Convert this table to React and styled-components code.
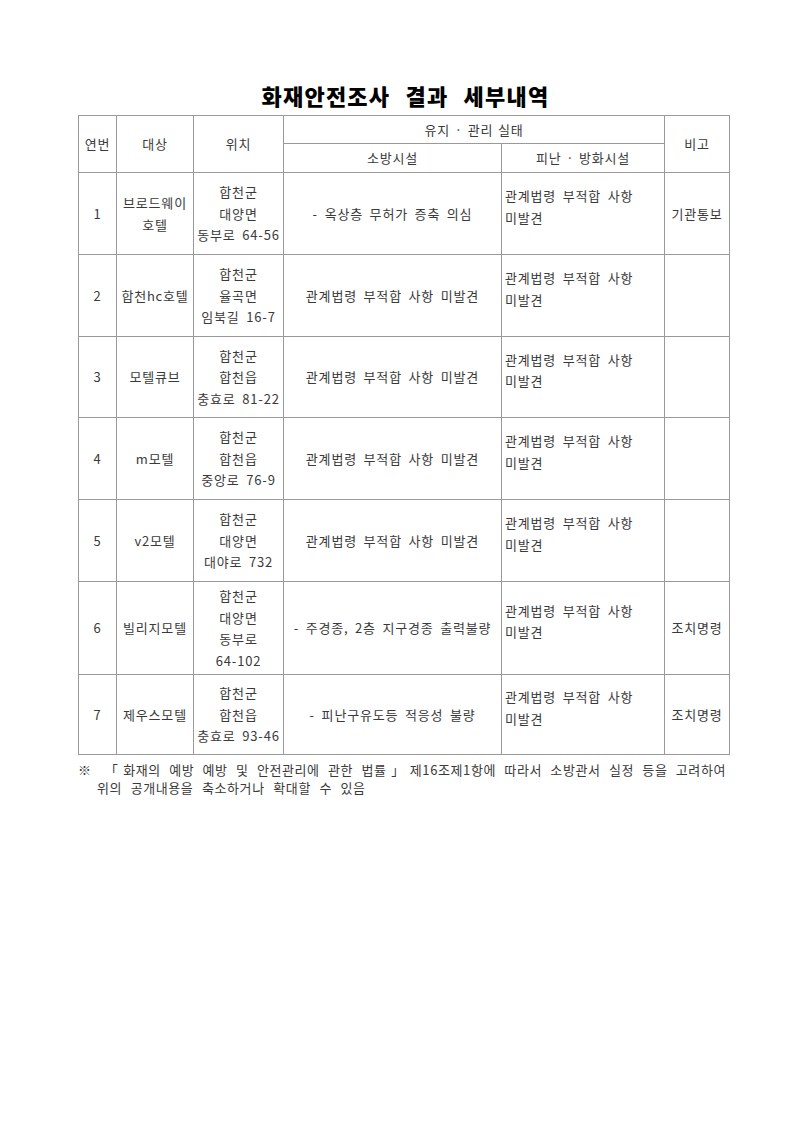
import React from "react";
import styled, { createGlobalStyle } from "styled-components";

const Global = createGlobalStyle`
  html, body { margin: 0; padding: 0; background: #fff; }
  body { font-family: "Noto Sans CJK KR", "Noto Sans", sans-serif; }
`;

const Page = styled.div`
  width: 800px;
  min-height: 1132px;
  box-sizing: border-box;
  padding: 80px 0 0 78px;
  background: #fff;
  color: #3a3a3a;
`;

const Title = styled.h1`
  margin: 0 0 5px 0;
  width: 651px;
  text-align: center;
  font-size: 22px;
  line-height: 30px;
  font-weight: 900;
  color: #000;
  letter-spacing: 1.2px;
  word-spacing: 9px;
  transform: translateX(2px);
`;

const Table = styled.table`
  width: 651px;
  table-layout: fixed;
  border-collapse: collapse;
  font-size: 13px;
  letter-spacing: 0.8px;
  word-spacing: 3px;
`;

const Row = styled.tr`
  height: ${(p) => p.$h}px;
`;

const Cell = styled.td`
  border: 1px solid #9a9a9a;
  padding: ${(p) => (p.$left ? "0 0 14px 3px" : "0 1px")};
  text-align: ${(p) => (p.$left ? "left" : "center")};
  vertical-align: middle;
  line-height: 21.5px;
  white-space: nowrap;
  font-weight: 400;
`;

const HeadCell = styled(Cell).attrs({ as: "th" })`
  font-weight: 400;
  padding: 0;
  word-spacing: 1px;
`;

const Line = styled.span`
  display: block;
`;

const Note = styled.div`
  width: 648px;
  margin-top: 6px;
  font-size: 13px;
  line-height: 18px;
  letter-spacing: 0.6px;
  color: #3a3a3a;
`;

const NoteLine = styled.div`
  padding-left: ${(p) => p.$indent || 0}px;
  text-align: ${(p) => (p.$justify ? "justify" : "left")};
  text-align-last: ${(p) => (p.$justify ? "justify" : "auto")};
  word-spacing: ${(p) => (p.$justify ? 0 : 5)}px;
  white-space: nowrap;
`;

const ok = "관계법령 부적합 사항 미발견";
const evac = ["관계법령 부적합 사항", "미발견"];

const rows = [
  { no: 1, h: 82, name: ["브로드웨이", "호텔"], loc: ["합천군", "대양면", "동부로 64-56"], fire: "- 옥상층 무허가 증축 의심", note: "기관통보" },
  { no: 2, h: 82, name: ["합천hc호텔"], loc: ["합천군", "율곡면", "임북길 16-7"], fire: ok, note: "" },
  { no: 3, h: 81, name: ["모텔큐브"], loc: ["합천군", "합천읍", "충효로 81-22"], fire: ok, note: "" },
  { no: 4, h: 82, name: ["m모텔"], loc: ["합천군", "합천읍", "중앙로 76-9"], fire: ok, note: "" },
  { no: 5, h: 82, name: ["v2모텔"], loc: ["합천군", "대양면", "대야로 732"], fire: ok, note: "" },
  { no: 6, h: 93, name: ["빌리지모텔"], loc: ["합천군", "대양면", "동부로", "64-102"], fire: "- 주경종, 2층 지구경종 출력불량", note: "조치명령" },
  { no: 7, h: 80, name: ["제우스모텔"], loc: ["합천군", "합천읍", "충효로 93-46"], fire: "- 피난구유도등 적응성 불량", note: "조치명령" },
];

const Lines = ({ items }) => items.map((t, i) => <Line key={i}>{t}</Line>);

export default function App() {
  return (
    <Page>
      <Global />
      <Title>화재안전조사 결과 세부내역</Title>
      <Table>
        <colgroup>
          <col style={{ width: 38 }} />
          <col style={{ width: 77 }} />
          <col style={{ width: 90 }} />
          <col style={{ width: 218 }} />
          <col style={{ width: 163 }} />
          <col style={{ width: 65 }} />
        </colgroup>
        <thead>
          <Row $h={28}>
            <HeadCell rowSpan={2}>연번</HeadCell>
            <HeadCell rowSpan={2}>대상</HeadCell>
            <HeadCell rowSpan={2}>위치</HeadCell>
            <HeadCell colSpan={2}>유지 · 관리 실태</HeadCell>
            <HeadCell rowSpan={2}>비고</HeadCell>
          </Row>
          <Row $h={29}>
            <HeadCell>소방시설</HeadCell>
            <HeadCell>피난 · 방화시설</HeadCell>
          </Row>
        </thead>
        <tbody>
          {rows.map((r) => (
            <Row key={r.no} $h={r.h}>
              <Cell>{r.no}</Cell>
              <Cell><Lines items={r.name} /></Cell>
              <Cell><Lines items={r.loc} /></Cell>
              <Cell>{r.fire}</Cell>
              <Cell $left><Lines items={evac} /></Cell>
              <Cell>{r.note}</Cell>
            </Row>
          ))}
        </tbody>
      </Table>
      <Note>
        <NoteLine $justify>※ 「화재의 예방 예방 및 안전관리에 관한 법률」제16조제1항에 따라서 소방관서 실정 등을 고려하여</NoteLine>
        <NoteLine $indent={19}>위의 공개내용을 축소하거나 확대할 수 있음</NoteLine>
      </Note>
    </Page>
  );
}
